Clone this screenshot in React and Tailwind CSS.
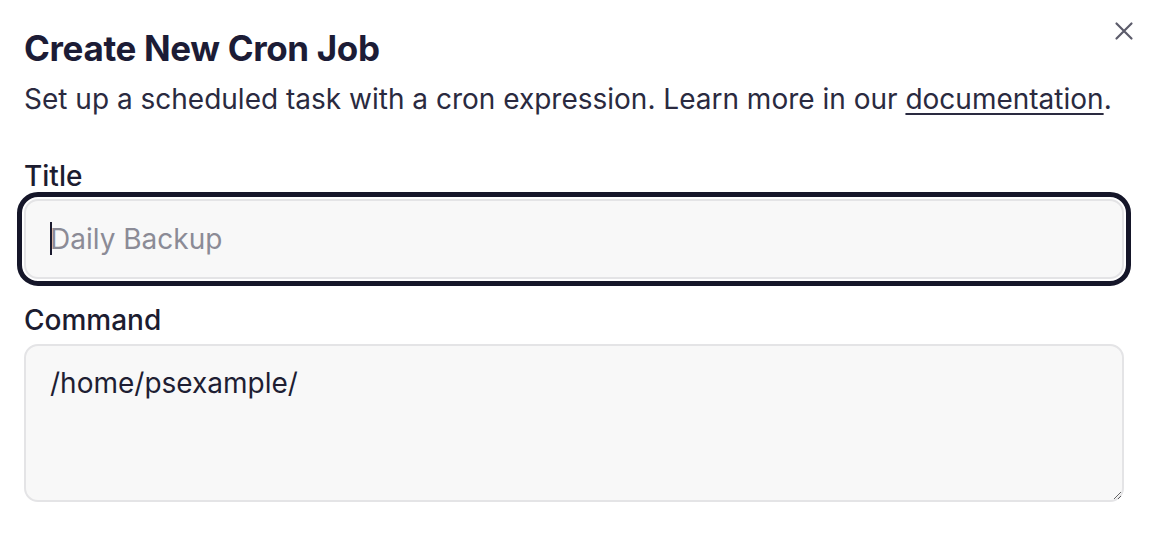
import React, { useState } from "react";

const App = () => {
  const [title, setTitle] = useState("");
  const [command, setCommand] = useState("/home/psexample/");

  return (
    <div
      className="w-[1156px] h-[548px] bg-white pl-6 pr-8 pt-[26px] text-[#1e1e33] relative"
      style={{ fontFamily: "Inter, 'Liberation Sans', sans-serif" }}
    >
      {/* close button */}
      <button className="absolute right-[20px] top-[19px] w-6 h-6 flex items-center justify-center text-[#5c5c6b]">
        <svg viewBox="0 0 24 24" className="w-6 h-6" fill="none" stroke="currentColor" strokeWidth={2.2} strokeLinecap="round">
          <path d="M4.5 4.5l15 15M19.5 4.5l-15 15" />
        </svg>
      </button>

      {/* header */}
      <h2 className="text-[35px] leading-[44px] font-bold tracking-[-0.01em] text-[#1c1c36]">
        Create New Cron Job
      </h2>
      <p className="mt-[11px] text-[28px] leading-9 text-[#2a2a40]">
        Set up a scheduled task with a cron expression. Learn more in our{" "}
        <a href="#" className="underline underline-offset-[4px] decoration-[2px]">documentation</a>.
      </p>

      {/* form */}
      <div className="mt-[41px] flex flex-col">
        <label className="text-[28px] leading-9 font-medium text-[#1c1c30]">Title</label>
        <div className="relative mt-[5px]">
          <input
            type="text"
            value={title}
            onChange={(e) => setTitle(e.target.value)}
            placeholder="Daily Backup"
            className="h-20 w-full rounded-[14px] border-2 border-[#e4e4e6] bg-[#f8f8f8] px-6 text-[28px] text-[#1e1e33] placeholder:text-[#8b8b96] caret-[#1a1a2e] outline-[5px] outline-solid outline-[#151629] outline-offset-[2px]"
          />
          {/* caret */}
          <span className="absolute left-[26px] top-[23px] h-[33px] w-[2px] bg-[#1a1a2e]" />
        </div>

        <label className="mt-[23px] text-[28px] leading-9 font-medium text-[#1c1c30]">Command</label>
        <textarea
          value={command}
          onChange={(e) => setCommand(e.target.value)}
          className="mt-[6px] h-[158px] w-full rounded-[14px] border-2 border-[#e4e4e6] bg-[#f8f8f8] px-6 pt-[19px] text-[28px] leading-9 text-[#1e1e33] focus:outline-none"
        />
      </div>
    </div>
  );
};

export default App;
